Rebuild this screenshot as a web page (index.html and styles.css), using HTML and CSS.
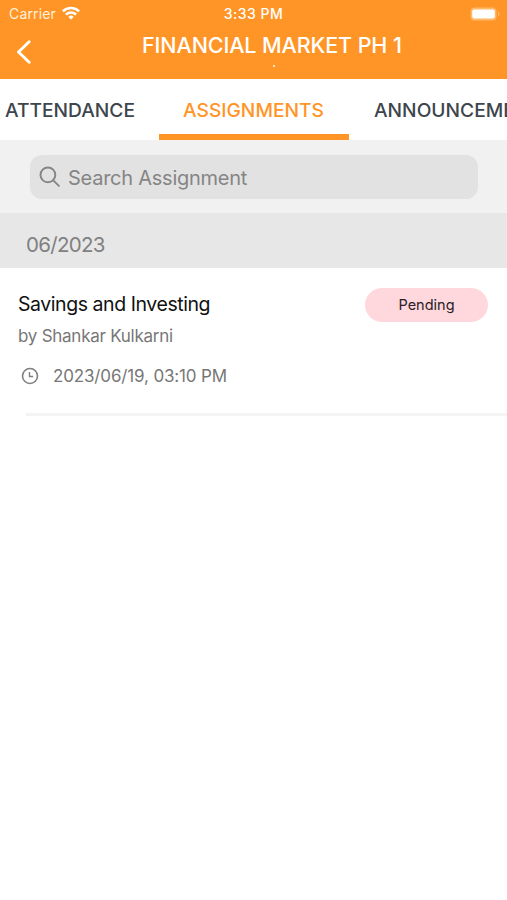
FILE: index.html
```html
<!DOCTYPE html>
<html lang="en">
<head>
<meta charset="utf-8">
<meta name="viewport" content="width=device-width, initial-scale=1">
<title>Assignments</title>
<link rel="stylesheet" href="styles.css">
</head>
<body>
<header class="header">
  <div class="status">
    <div class="status-left">
      <span class="carrier">Carrier</span>
      <svg class="wifi" viewBox="0 0 18 14" fill="none" stroke="#fff" stroke-width="2.5"><path d="M.9 5.3a11.6 11.6 0 0 1 16.2 0M3.9 8.6a7.3 7.3 0 0 1 10.2 0"/><path d="M9 13.6 6.3 10.9a3.9 3.9 0 0 1 5.4 0z" fill="#fff" stroke="none"/></svg>
    </div>
    <span class="clock">3:33 PM</span>
    <div class="status-right"><svg class="battery" viewBox="0 0 30 14"><rect x=".5" y=".5" width="26" height="13" rx="4" fill="#ffb768"/><rect x="2.2" y="2.5" width="22.6" height="9" rx="2" fill="#fff"/><path d="M28 4.5v5q1.6-.8 1.6-2.5T28 4.5z" fill="#ffb768"/></svg></div>
  </div>
  <div class="nav">
    <button class="back" aria-label="Back"><svg viewBox="0 0 16 24" fill="none" stroke="#fff" stroke-width="2.9" stroke-linecap="round" stroke-linejoin="round"><path d="M13.2 1.8 2.5 12l10.7 10.2"/></svg></button>
    <div class="heading"><h1 class="title">FINANCIAL MARKET PH 1</h1><span class="dot"></span></div>
  </div>
</header>
<nav class="tabs">
  <a class="tab tab-first"><span>ATTENDANCE</span></a>
  <a class="tab tab-active"><span>ASSIGNMENTS</span></a>
  <a class="tab tab-last"><span>ANNOUNCEMENTS</span></a>
</nav>
<div class="search-area">
  <div class="search">
    <svg class="search-icon" viewBox="0 0 22 22" fill="none" stroke="#858585" stroke-width="1.9" stroke-linecap="round"><circle cx="8.9" cy="8.9" r="7.4"/><path d="m14.3 14.3 5.6 5.6"/></svg>
    <span class="placeholder">Search Assignment</span>
  </div>
</div>
<div class="month"><span>06/2023</span></div>
<main class="item">
  <div class="item-top">
    <h2 class="item-title"><span>Savings and Investing</span></h2>
    <span class="badge">Pending</span>
  </div>
  <p class="author">by Shankar Kulkarni</p>
  <div class="due">
    <svg class="due-icon" viewBox="0 0 18 18" fill="none" stroke="#808080" stroke-width="1.6"><circle cx="9" cy="9" r="7.5"/><path d="M8.5 5v4.5h3.7" stroke-width="1.4"/></svg>
    <span>2023/06/19, 03:10 PM</span>
  </div>
</main>
</body>
</html>
```
FILE: styles.css
```css
* { box-sizing: border-box; }
body {
  margin: 0;
  background: #fff;
  font-family: Inter, "Liberation Sans", sans-serif;
  overflow: hidden;
}
h1, h2, p { margin: 0; }
span { white-space: nowrap; }
.header { height: 79px; background: #ff9526; color: #fff; }
.status {
  display: grid;
  grid-template-columns: 1fr auto 1fr;
  align-items: center;
  height: 28px;
  padding: 0 7px 0 9px;
}
.status-left { display: flex; align-items: center; gap: 6px; }
.carrier { font-size: 14px; line-height: 28px; letter-spacing: .15px; color: #fff1dc; }
.wifi { width: 18px; height: 14px; margin-top: -2px; }
.clock { margin-right: 2px; font-size: 14px; font-weight: 500; line-height: 28px; letter-spacing: .5px; }
.status-right { display: flex; justify-content: flex-end; }
.battery { width: 30px; height: 14px; }
.nav { display: flex; height: 51px; padding-left: 16px; }
.back { width: 16px; height: 24px; margin: 12px 0 0; padding: 0; border: 0; background: none; }
.back svg { display: block; width: 16px; height: 24px; }
.heading {
  display: flex;
  flex-direction: column;
  align-items: center;
  width: 263px;
  margin-left: 110px;
}
.title { align-self: flex-start; font-size: 21.5px; font-weight: 500; line-height: 34px; letter-spacing: -.1px; white-space: nowrap; }
.dot { width: 2px; height: 2px; margin-top: 3px; background: #ffe3bf; }
.tabs { display: flex; height: 61px; background: #fff; overflow: hidden; }
.tab {
  flex: none;
  height: 61px;
  color: #3d454d;
  font-size: 19.2px;
  font-weight: 500;
  line-height: 62px;
}
.tab-first { width: 159px; padding-left: 5px; }
.tab-active { width: 190px; padding-left: 24px; color: #ff9526; border-bottom: 6px solid #ff9526; }
.tab-last { padding-left: 25px; }
.search-area { height: 73px; padding: 15px 29px 0 30px; background: #f1f1f1; }
.search {
  display: flex;
  align-items: center;
  height: 44px;
  padding-left: 9px;
  gap: 7px;
  border-radius: 12px;
  background: #e2e2e2;
}
.search-icon { width: 22px; height: 22px; }
.placeholder { color: #858585; font-size: 20px; line-height: 44px; letter-spacing: -.25px; padding-top: 1px; }
.month { height: 55px; padding: 4px 26px; background: #e7e7e7; color: #808080; font-size: 20.5px; line-height: 55px; letter-spacing: -.7px; }
.item { height: 148px; padding: 20px 0 0 18px; background: linear-gradient(#f4f4f4, #f4f4f4) 26px 100% / 100% 3px no-repeat; }
.item-top { display: flex; justify-content: space-between; height: 34px; padding-right: 19px; }
.item-title { font-size: 19.5px; font-weight: 400; line-height: 32px; letter-spacing: -.44px; color: #111; }
.badge {
  width: 123px;
  height: 34px;
  border-radius: 17px;
  background: #ffd8de;
  color: #2b2024;
  font-size: 14.5px;
  line-height: 34px;
  text-align: center;
}
.author { font-size: 17px; line-height: 28px; letter-spacing: -.26px; color: #777; }
.due { display: flex; align-items: center; gap: 14px; height: 28px; margin-top: 12px; padding-left: 3px; color: #777; font-size: 17px; letter-spacing: -.15px; }
.due-icon { width: 18px; height: 18px; }
```
